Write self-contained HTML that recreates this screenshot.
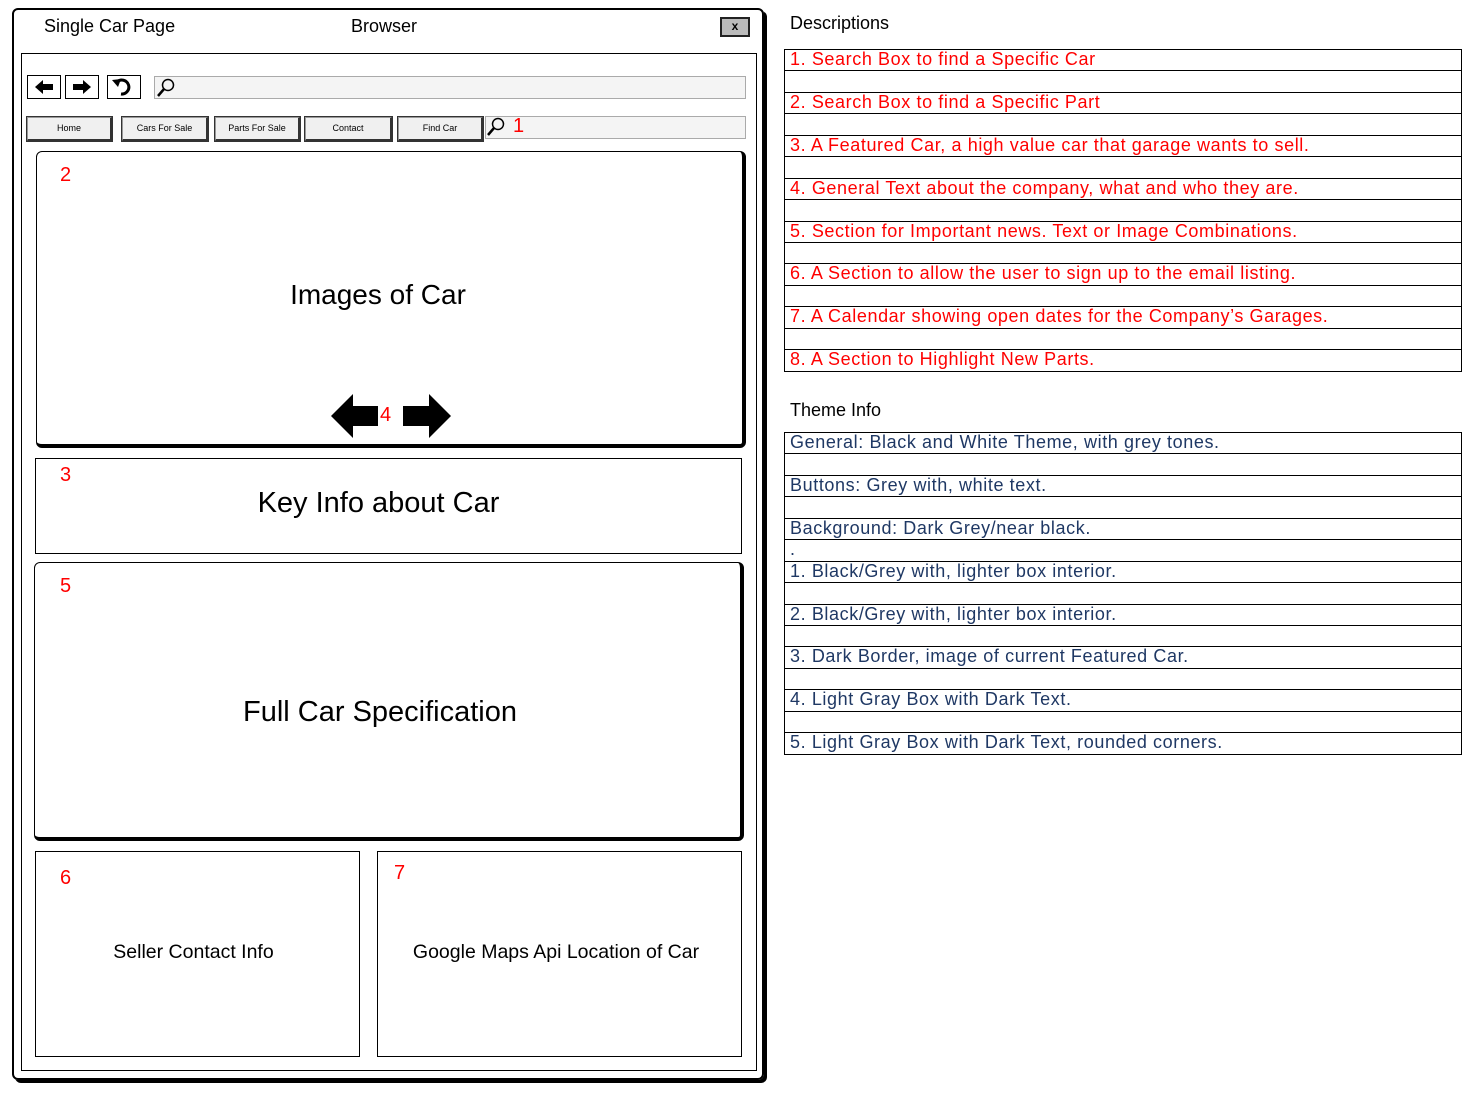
<!DOCTYPE html>
<html><head><meta charset="utf-8"><style>
*{margin:0;padding:0;box-sizing:border-box}
body{width:1465px;height:1093px;background:#fff;position:relative;overflow:hidden;font-family:"Liberation Sans",sans-serif;color:#000}
.a{position:absolute}
.red{color:#f00}
.btn{position:absolute;top:117px;height:24px;background:#f0f0f0;border:1px solid #999;border-right:2px solid #333;border-bottom:2px solid #333;font-size:9px;text-align:center;line-height:20px;outline:1px solid #333}
.box{position:absolute;border:1px solid #000}
.tbl{position:absolute;left:784px;width:678px;border-top:1px solid #000}
.tbl div{height:21.45px;border:1px solid #000;border-top:none;font-size:18px;letter-spacing:0.6px;line-height:18px;padding-left:5px;white-space:nowrap;overflow:hidden}
.r div{color:#f00}
.b div{color:#1f3864}
.nb{position:absolute;width:34px;height:24px;border:1px solid #000}
</style></head><body>
<div class="a" style="left:12px;top:8px;width:752px;height:1072px;border:2px solid #000;border-radius:6px;box-shadow:3px 3px 0 #000"></div>
<div class="a" style="left:44px;top:16px;font-size:18px">Single Car Page</div>
<div class="a" style="left:351px;top:16px;font-size:18px">Browser</div>
<div class="a" style="left:720px;top:17px;width:30px;height:20px;background:#bbb;border:2px solid #222;font-size:12px;font-weight:bold;text-align:center;line-height:15px">x</div>
<div class="a" style="left:21px;top:53px;width:736px;height:1018px;border:1px solid #000"></div>
<div class="nb" style="left:27px;top:75px"><svg width="32" height="22"><path d="M7 11 L15 4 V8 H25 V14 H15 V18 Z"/></svg></div>
<div class="nb" style="left:65px;top:75px"><svg width="32" height="22"><path d="M25 11 L17 4 V8 H7 V14 H17 V18 Z"/></svg></div>
<div class="nb" style="left:107px;top:75px"><svg width="32" height="22"><path d="M9 6 A7 7 0 1 1 13 18" fill="none" stroke="#000" stroke-width="3"/><path d="M4 4 L13 3 L10 11 Z"/></svg></div>
<div class="a" style="left:154px;top:76px;width:592px;height:23px;background:#f4f4f4;border:1px solid #aaa"></div>
<svg class="a" style="left:155px;top:77px" width="22" height="22"><circle cx="13" cy="8" r="5.5" fill="none" stroke="#000" stroke-width="1.5"/><path d="M9 12 L3 19" stroke="#000" stroke-width="2.5"/></svg>
<div class="btn" style="left:27px;width:85px">Home</div>
<div class="btn" style="left:122px;width:86px">Cars For Sale</div>
<div class="btn" style="left:215px;width:85px">Parts For Sale</div>
<div class="btn" style="left:305px;width:87px">Contact</div>
<div class="btn" style="left:398px;width:85px">Find Car</div>
<div class="a" style="left:485px;top:116px;width:261px;height:23px;background:#f4f4f4;border:1px solid #aaa"></div>
<svg class="a" style="left:485px;top:116px" width="22" height="22"><circle cx="13" cy="8" r="5.5" fill="none" stroke="#000" stroke-width="1.5"/><path d="M9 12 L3 19" stroke="#000" stroke-width="2.5"/></svg>
<div class="a red" style="left:513px;top:115px;font-size:20px">1</div>
<div class="a" style="left:36px;top:151px;width:710px;height:297px;border:1px solid #000;border-right:4px solid #000;border-bottom:4px solid #000;border-radius:6px"></div>
<div class="a red" style="left:60px;top:164px;font-size:20px">2</div>
<div class="a" style="left:36px;top:279px;width:684px;text-align:center;font-size:28px">Images of Car</div>
<svg class="a" style="left:330px;top:394px" width="125" height="46"><path d="M1 22 L23 0 V12 H48 V32 H23 V44 Z"/><path d="M121 22 L99 0 V12 H73 V32 H99 V44 Z"/></svg>
<div class="a red" style="left:380px;top:404px;font-size:20px">4</div>
<div class="box" style="left:35px;top:458px;width:707px;height:96px"></div>
<div class="a red" style="left:60px;top:464px;font-size:20px">3</div>
<div class="a" style="left:35px;top:487px;width:687px;text-align:center;font-size:29px">Key Info about Car</div>
<div class="a" style="left:34px;top:562px;width:710px;height:279px;border:1px solid #000;border-right:4px solid #000;border-bottom:4px solid #000;border-radius:6px"></div>
<div class="a red" style="left:60px;top:575px;font-size:20px">5</div>
<div class="a" style="left:35px;top:696px;width:690px;text-align:center;font-size:29px">Full Car Specification</div>
<div class="box" style="left:35px;top:851px;width:325px;height:206px"></div>
<div class="a red" style="left:60px;top:867px;font-size:20px">6</div>
<div class="a" style="left:35px;top:941px;width:317px;text-align:center;font-size:19.5px">Seller Contact Info</div>
<div class="box" style="left:377px;top:851px;width:365px;height:206px"></div>
<div class="a red" style="left:394px;top:862px;font-size:20px">7</div>
<div class="a" style="left:377px;top:941px;width:358px;text-align:center;font-size:19.5px">Google Maps Api Location of Car</div>
<div class="a" style="left:790px;top:13px;font-size:18px">Descriptions</div>
<div class="tbl r" style="top:49px">
<div>1. Search Box to find a Specific Car</div><div></div>
<div>2. Search Box to find a Specific Part</div><div></div>
<div>3. A Featured Car, a high value car that garage wants to sell.</div><div></div>
<div>4. General Text about the company, what and who they are.</div><div></div>
<div>5. Section for Important news. Text or Image Combinations.</div><div></div>
<div>6. A Section to allow the user to sign up to the email listing.</div><div></div>
<div>7. A Calendar showing open dates for the Company’s Garages.</div><div></div>
<div>8. A Section to Highlight New Parts.</div>
</div>
<div class="a" style="left:790px;top:400px;font-size:18px">Theme Info</div>
<div class="tbl b" style="top:432px">
<div>General: Black and White Theme, with grey tones.</div><div></div>
<div>Buttons: Grey with, white text.</div><div></div>
<div>Background: Dark Grey/near black.</div><div>.</div>
<div>1. Black/Grey with, lighter box interior.</div><div></div>
<div>2. Black/Grey with, lighter box interior.</div><div></div>
<div>3. Dark Border, image of current Featured Car.</div><div></div>
<div>4. Light Gray Box with Dark Text.</div><div></div>
<div>5. Light Gray Box with Dark Text, rounded corners.</div>
</div>
</body></html>
